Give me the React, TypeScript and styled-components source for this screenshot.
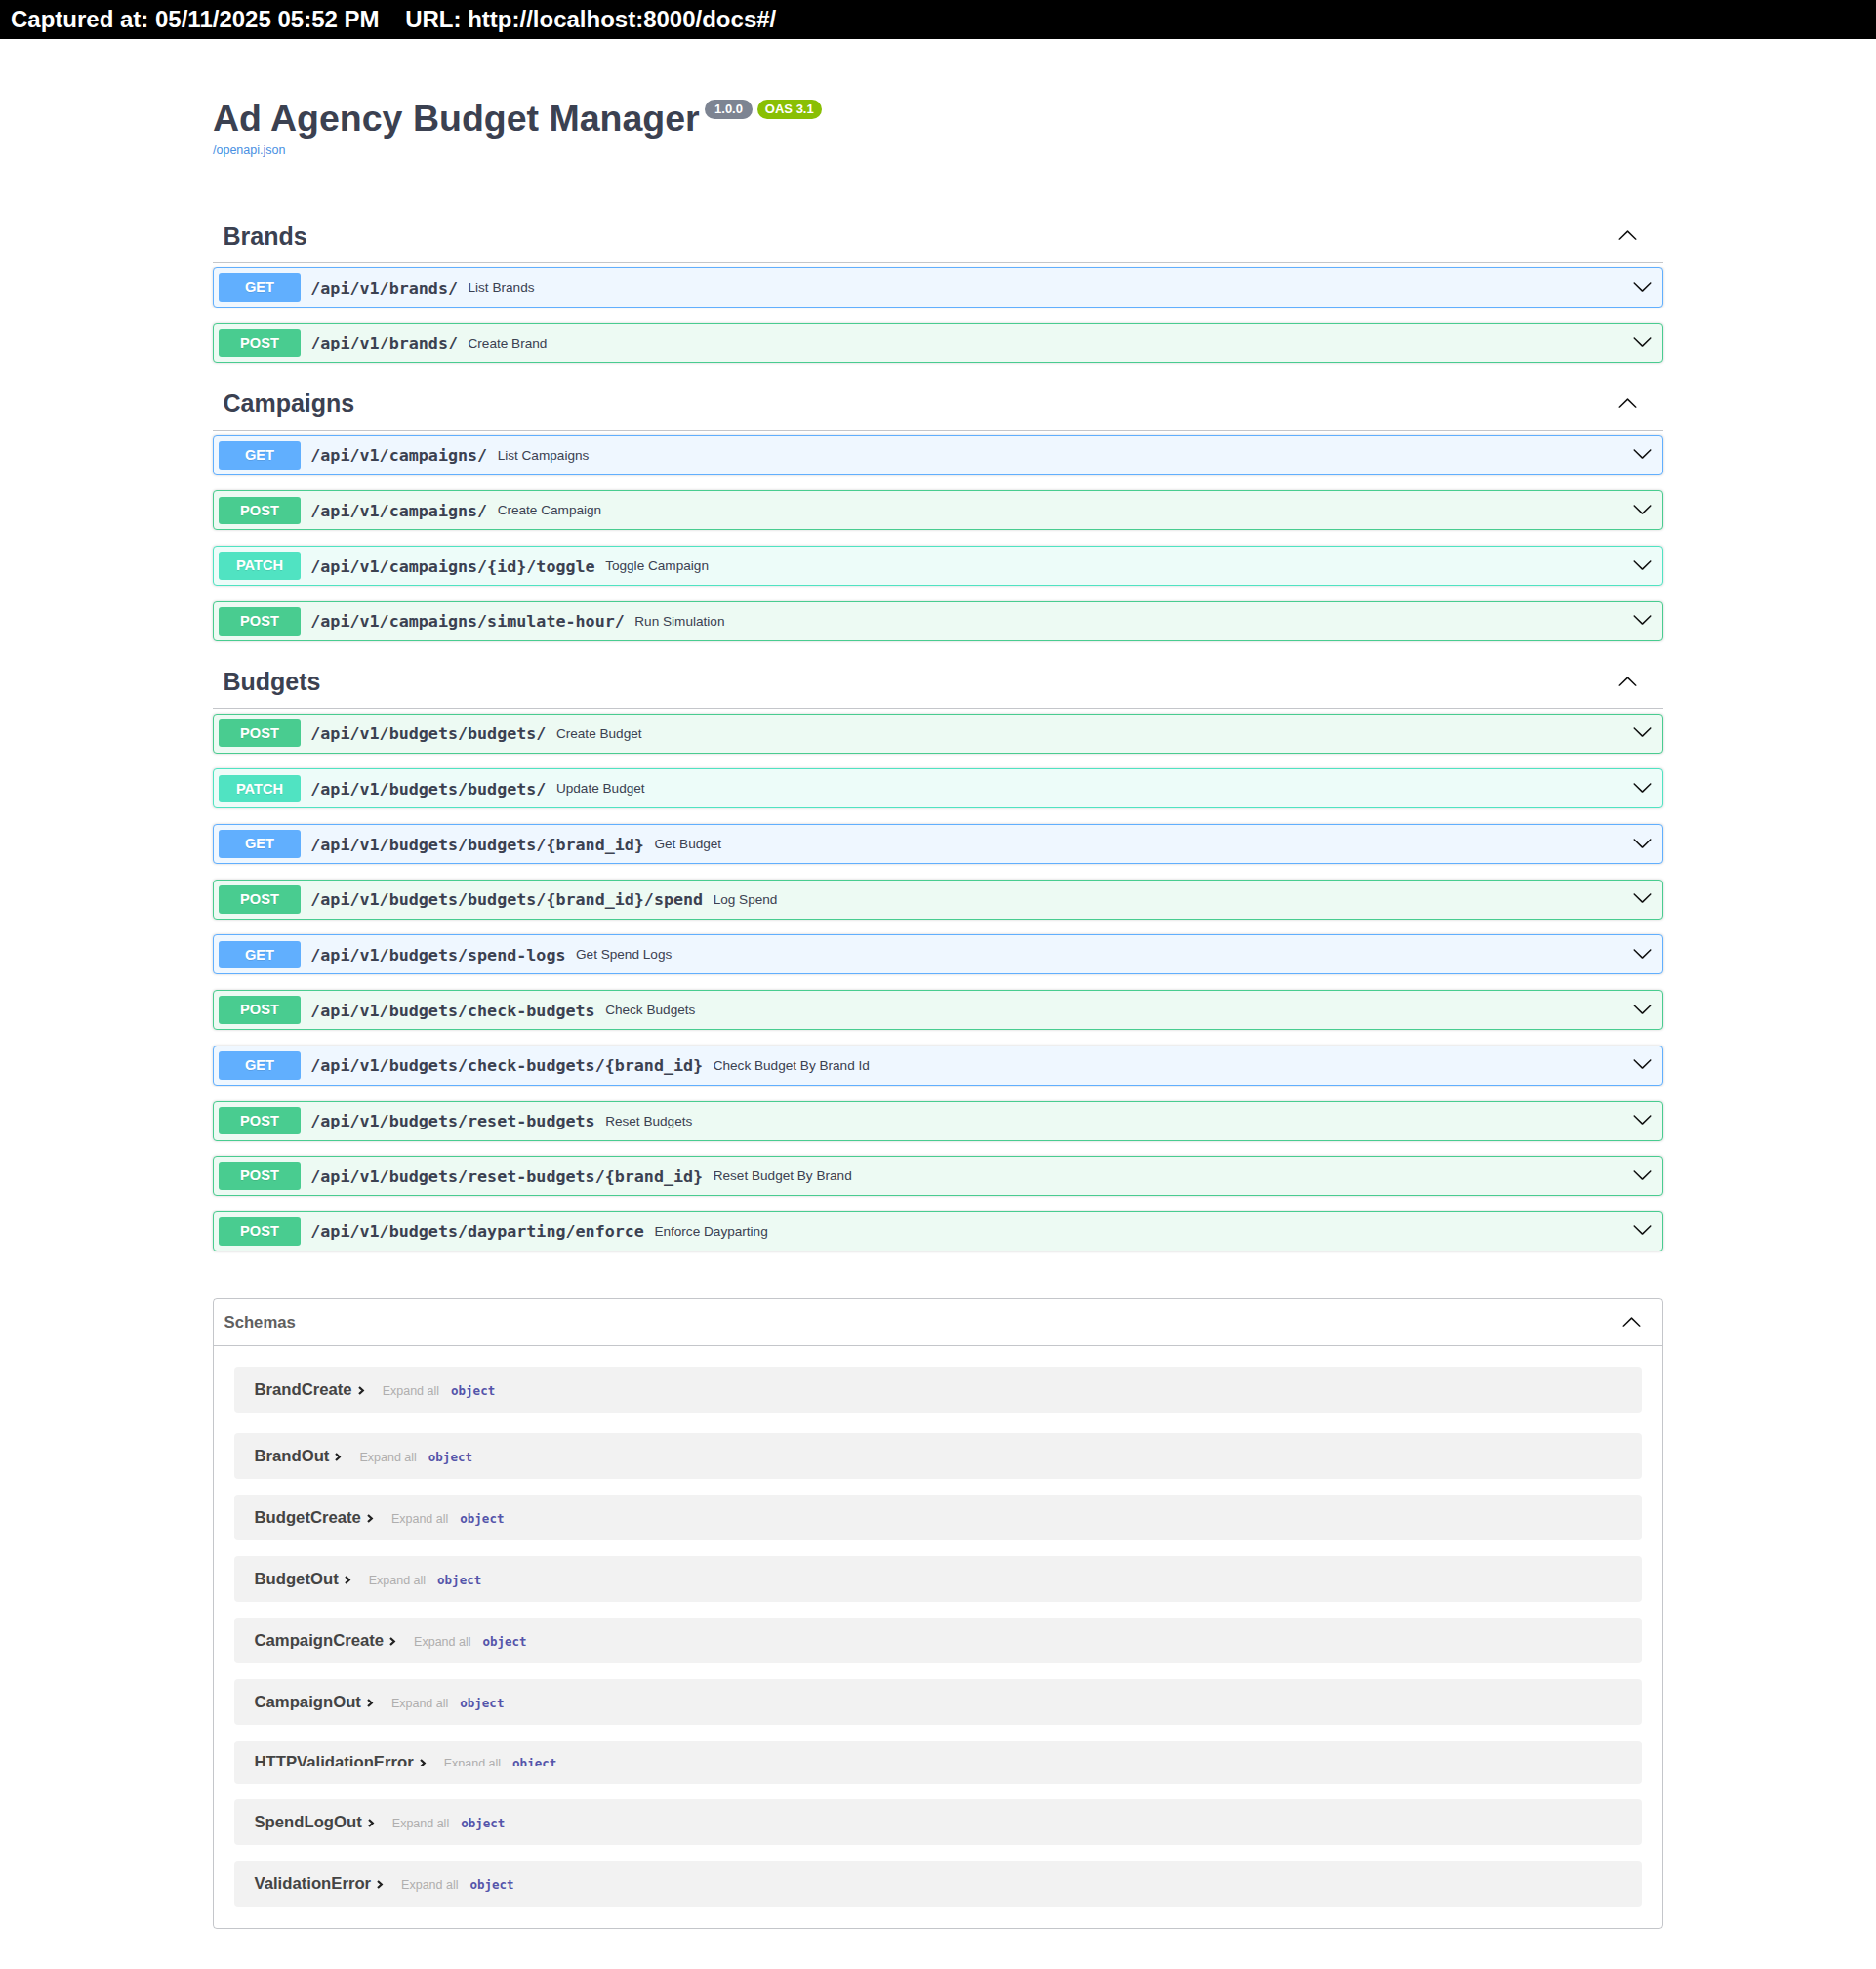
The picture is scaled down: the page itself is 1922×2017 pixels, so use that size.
import React from "react";
import styled, { createGlobalStyle } from "styled-components";

const GlobalStyle = createGlobalStyle`
  html, body { margin: 0; padding: 0; background: #fff; }
  body { font-family: "Liberation Sans", Arial, sans-serif; color: #3b4151; }
  * { box-sizing: border-box; }
`;

type Method = "GET" | "POST" | "PATCH";

const METHOD_COLORS: Record<Method, { solid: string; tint: string }> = {
  GET: { solid: "#61affe", tint: "#eff7ff" },
  POST: { solid: "#49cc90", tint: "#edfaf3" },
  PATCH: { solid: "#50e3c2", tint: "#edfcf9" },
};

const TopBar = styled.header`
  height: 40px;
  background: #000;
  color: #fff;
  display: flex;
  align-items: center;
  padding-left: 11px;
  font: bold 24px "Liberation Sans", Arial, sans-serif;
  white-space: pre;
`;

const Wrapper = styled.main`
  width: 1486px;
  margin: 0 auto;
  padding-bottom: 20px;
`;

const Info = styled.section`
  padding-top: 60.3px;
  margin-bottom: 54.3px;
`;

const TitleRow = styled.div`
  display: flex;
  align-items: flex-start;
`;

const Title = styled.h2`
  margin: 0;
  font: bold 37.5px/42px "Liberation Sans", Arial, sans-serif;
  color: #3b4151;
`;

const Badges = styled.div`
  display: flex;
  gap: 5px;
  margin: 2px 0 0 5.5px;
`;

const Badge = styled.span<{ $bg: string }>`
  display: inline-block;
  height: 19.4px;
  min-width: 48.7px;
  padding: 0 8px;
  border-radius: 57px;
  background: ${(p) => p.$bg};
  color: #fff;
  font: bold 13px/19.4px "Liberation Sans", Arial, sans-serif;
  text-align: center;
`;

const BaseUrl = styled.a`
  display: block;
  margin-top: 5px;
  font: 12.5px/14.4px "Liberation Sans", Arial, sans-serif;
  color: #4990e2;
  text-decoration: none;
`;

const TagSection = styled.section``;

const TagHeader = styled.h3`
  margin: 0 0 5.2px;
  height: 53px;
  display: flex;
  align-items: center;
  justify-content: space-between;
  padding: 10.5px 21px 10.5px 10.5px;
  border-bottom: 1px solid rgba(59, 65, 81, 0.3);
  font: bold 25px "Liberation Sans", Arial, sans-serif;
  color: #3b4151;
`;

const OpBlock = styled.div<{ $method: Method }>`
  height: 41px;
  margin-bottom: 15.7px;
  display: flex;
  align-items: center;
  padding: 5.2px;
  border: 1px solid ${(p) => METHOD_COLORS[p.$method].solid};
  border-radius: 4px;
  background: ${(p) => METHOD_COLORS[p.$method].tint};
  box-shadow: 0 0 3px rgba(0, 0, 0, 0.19);
`;

const MethodBadge = styled.span<{ $method: Method }>`
  flex: none;
  width: 83.6px;
  height: 28.6px;
  border-radius: 3px;
  background: ${(p) => METHOD_COLORS[p.$method].solid};
  color: #fff;
  font: bold 14.6px/28.6px "Liberation Sans", Arial, sans-serif;
  text-align: center;
  text-shadow: 0 1px 0 rgba(0, 0, 0, 0.1);
`;

const OpPath = styled.span`
  padding: 0 10.5px;
  font: bold 16.7px "DejaVu Sans Mono", "Liberation Mono", monospace;
  color: #3b4151;
  white-space: nowrap;
`;

const OpDescription = styled.span`
  flex: 1 1 auto;
  font: 13.6px "Liberation Sans", Arial, sans-serif;
  color: #3b4151;
`;

const ArrowSvg = styled.svg<{ $right: number }>`
  flex: none;
  width: 21px;
  height: 21px;
  margin: 0 ${(p) => p.$right}px 3px 0;
  fill: #111;
`;

const Models = styled.section`
  margin-top: 48.5px;
  border: 1px solid rgba(59, 65, 81, 0.3);
  border-radius: 4px;
`;

const ModelsHeader = styled.h4`
  margin: 0;
  height: 47.5px;
  display: flex;
  align-items: center;
  justify-content: space-between;
  padding: 10.5px 21px 10.5px 10.5px;
  border-bottom: 1px solid rgba(59, 65, 81, 0.3);
  font: bold 16.7px "Liberation Sans", Arial, sans-serif;
  color: #606060;
`;

const ModelList = styled.div`
  padding: 0 20.9px 6px;
`;

const ModelRow = styled.div<{ $clipped?: boolean }>`
  height: ${(p) => (p.$clipped ? "44.3px" : "47.3px")};
  margin-bottom: 15.7px;
  padding: ${(p) => (p.$clipped ? "9.2px" : "10.5px")} 20.6px 0;
  border-radius: 4px;
  background: rgba(0, 0, 0, 0.05);

  &:first-child {
    margin-top: 21px;
    margin-bottom: 21px;
  }
`;

const ModelClip = styled.div<{ $clipped?: boolean }>`
  height: ${(p) => (p.$clipped ? "16.8px" : "26px")};
  overflow: hidden;
`;

const ModelLine = styled.div`
  height: 26px;
  padding-top: 3.4px;
  display: flex;
  align-items: baseline;
`;

const ModelName = styled.span`
  font: bold 16.7px "Liberation Sans", Arial, sans-serif;
  color: #444;
`;

const ToggleSvg = styled.svg`
  width: 8px;
  height: 9px;
  margin-left: 5px;
  margin-bottom: -1px;
  fill: none;
  stroke: #222;
  stroke-width: 2.2;
`;

const ExpandAll = styled.span`
  margin-left: 18px;
  font: 12.5px "Liberation Sans", Arial, sans-serif;
  color: #afaeae;
`;

const TypeLabel = styled.span`
  margin-left: 12px;
  font: bold 12.5px "DejaVu Sans Mono", "Liberation Mono", monospace;
  color: #55a;
`;

const UP_PATH =
  "M17.418 14.908c.272.268.709.268.979 0s.271-.701 0-.969l-7.908-7.83a.697.697 0 0 0-.979 0l-7.908 7.83c-.27.268-.27.701 0 .969.271.268.709.268.979 0L10 7.767l7.418 7.141z";
const DOWN_PATH =
  "M17.418 6.109c.272-.268.709-.268.979 0s.271.701 0 .969l-7.908 7.83c-.27.268-.707.268-.979 0l-7.908-7.83c-.27-.268-.27-.701 0-.969.271-.268.709-.268.979 0L10 13.25l7.418-7.141z";

const Arrow = ({ dir, right }: { dir: "up" | "down"; right: number }) => (
  <ArrowSvg $right={right} viewBox="0 0 20 20" aria-hidden>
    <path d={dir === "up" ? UP_PATH : DOWN_PATH} />
  </ArrowSvg>
);

type Op = { method: Method; path: string; summary: string };

const SECTIONS: { name: string; ops: Op[] }[] = [
  {
    name: "Brands",
    ops: [
      { method: "GET", path: "/api/v1/brands/", summary: "List Brands" },
      { method: "POST", path: "/api/v1/brands/", summary: "Create Brand" },
    ],
  },
  {
    name: "Campaigns",
    ops: [
      { method: "GET", path: "/api/v1/campaigns/", summary: "List Campaigns" },
      { method: "POST", path: "/api/v1/campaigns/", summary: "Create Campaign" },
      { method: "PATCH", path: "/api/v1/campaigns/{id}/toggle", summary: "Toggle Campaign" },
      { method: "POST", path: "/api/v1/campaigns/simulate-hour/", summary: "Run Simulation" },
    ],
  },
  {
    name: "Budgets",
    ops: [
      { method: "POST", path: "/api/v1/budgets/budgets/", summary: "Create Budget" },
      { method: "PATCH", path: "/api/v1/budgets/budgets/", summary: "Update Budget" },
      { method: "GET", path: "/api/v1/budgets/budgets/{brand_id}", summary: "Get Budget" },
      { method: "POST", path: "/api/v1/budgets/budgets/{brand_id}/spend", summary: "Log Spend" },
      { method: "GET", path: "/api/v1/budgets/spend-logs", summary: "Get Spend Logs" },
      { method: "POST", path: "/api/v1/budgets/check-budgets", summary: "Check Budgets" },
      { method: "GET", path: "/api/v1/budgets/check-budgets/{brand_id}", summary: "Check Budget By Brand Id" },
      { method: "POST", path: "/api/v1/budgets/reset-budgets", summary: "Reset Budgets" },
      { method: "POST", path: "/api/v1/budgets/reset-budgets/{brand_id}", summary: "Reset Budget By Brand" },
      { method: "POST", path: "/api/v1/budgets/dayparting/enforce", summary: "Enforce Dayparting" },
    ],
  },
];

const SCHEMAS: { name: string; clipped?: boolean }[] = [
  { name: "BrandCreate" },
  { name: "BrandOut" },
  { name: "BudgetCreate" },
  { name: "BudgetOut" },
  { name: "CampaignCreate" },
  { name: "CampaignOut" },
  { name: "HTTPValidationError", clipped: true },
  { name: "SpendLogOut" },
  { name: "ValidationError" },
];

export default function App() {
  return (
    <>
      <GlobalStyle />
      <TopBar>{"Captured at: 05/11/2025 05:52 PM    URL: http://localhost:8000/docs#/"}</TopBar>
      <Wrapper>
        <Info>
          <TitleRow>
            <Title>Ad Agency Budget Manager</Title>
            <Badges>
              <Badge $bg="#7d8492">1.0.0</Badge>
              <Badge $bg="#89bf04">OAS 3.1</Badge>
            </Badges>
          </TitleRow>
          <BaseUrl href="#">/openapi.json</BaseUrl>
        </Info>

        {SECTIONS.map((section) => (
          <TagSection key={section.name}>
            <TagHeader>
              <span>{section.name}</span>
              <Arrow dir="up" right={5} />
            </TagHeader>
            {section.ops.map((op) => (
              <OpBlock key={op.method + op.path} $method={op.method}>
                <MethodBadge $method={op.method}>{op.method}</MethodBadge>
                <OpPath>{op.path}</OpPath>
                <OpDescription>{op.summary}</OpDescription>
                <Arrow dir="down" right={5.3} />
              </OpBlock>
            ))}
          </TagSection>
        ))}

        <Models>
          <ModelsHeader>
            <span>Schemas</span>
            <Arrow dir="up" right={0} />
          </ModelsHeader>
          <ModelList>
            {SCHEMAS.map((s) => (
              <ModelRow key={s.name} $clipped={s.clipped}>
                <ModelClip $clipped={s.clipped}>
                  <ModelLine>
                    <ModelName>{s.name}</ModelName>
                    <ToggleSvg viewBox="0 0 8 9" aria-hidden>
                      <path d="M2 1 L5.8 4.5 L2 8" />
                    </ToggleSvg>
                    <ExpandAll>Expand all</ExpandAll>
                    <TypeLabel>object</TypeLabel>
                  </ModelLine>
                </ModelClip>
              </ModelRow>
            ))}
          </ModelList>
        </Models>
      </Wrapper>
    </>
  );
}
